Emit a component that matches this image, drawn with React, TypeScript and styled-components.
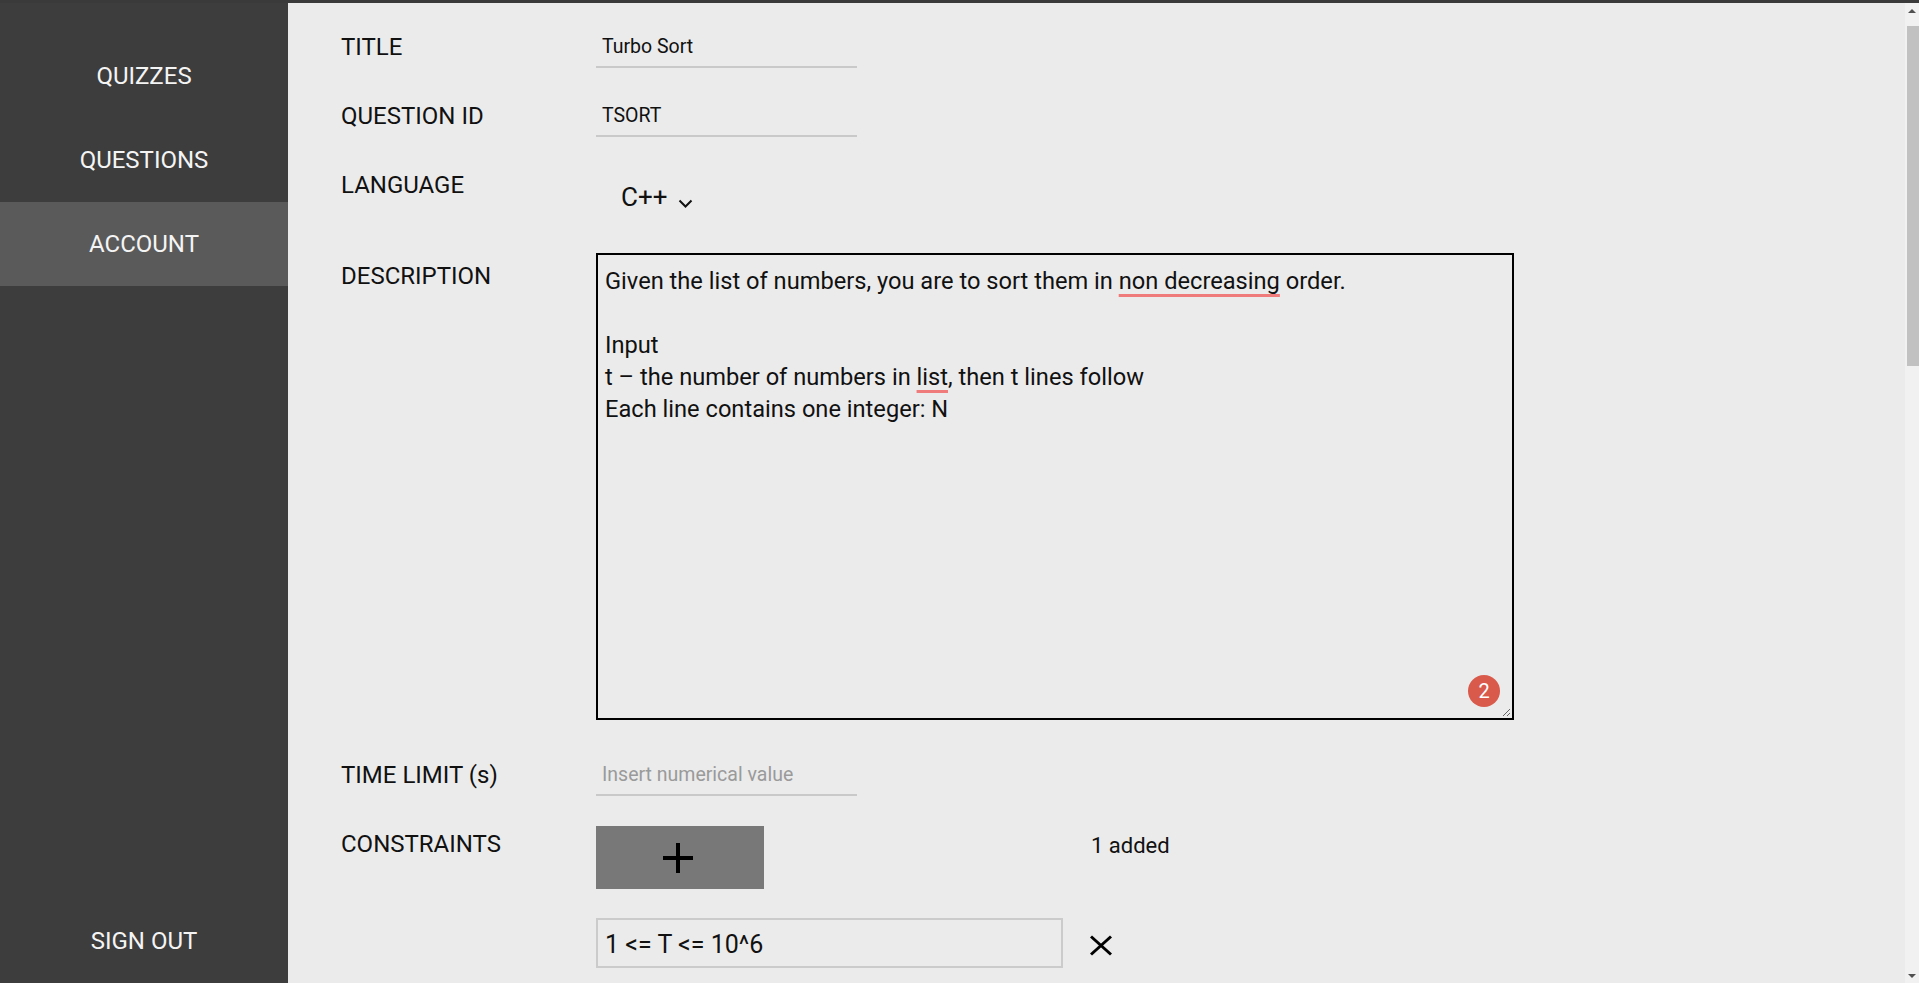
import styled, { createGlobalStyle } from 'styled-components'

const GlobalStyle = createGlobalStyle`
  html, body {
    margin: 0;
    height: 100%;
    overflow: hidden;
  }
  body {
    font-family: Roboto, "Liberation Sans", Arial, sans-serif;
    background: #3d3d3d;
  }
  #root {
    height: 100%;
  }
`

const Shell = styled.div`
  height: 100vh;
  display: flex;
  flex-direction: column;
  border-top: 3px solid #3a3a3a;
  box-sizing: border-box;
`
const Body = styled.div`
  flex: 1;
  min-height: 0;
  display: flex;
`
const Sidebar = styled.nav`
  width: 288px;
  flex-shrink: 0;
  background: #3d3d3d;
  display: flex;
  flex-direction: column;
  padding-top: 31px;
  box-sizing: border-box;
`
const NavItem = styled.a<{ $active?: boolean }>`
  height: 84px;
  display: flex;
  align-items: center;
  justify-content: center;
  color: #f4f4f4;
  font-size: 24px;
  text-decoration: none;
  cursor: pointer;
  background: ${(p) => (p.$active ? '#5a5a5a' : 'transparent')};
`
const SignOut = styled(NavItem)`
  margin-top: auto;
`

const Main = styled.main`
  flex: 1;
  overflow: hidden;
  background: #ebebeb;
`

// page scrollbar, drawn since the window shows it at scroll top
const ScrollRail = styled.div`
  width: 14px;
  flex-shrink: 0;
  background: #f1f1f1;
  display: flex;
  flex-direction: column;
  align-items: center;
  padding: 6px 0 5px;
  box-sizing: border-box;
`
const Arrow = styled.svg`
  flex-shrink: 0;
`
const Thumb = styled.div`
  align-self: stretch;
  margin: 13px 0 0 2px;
  height: 340px;
  background: #c1c1c1;
`
const RailSpacer = styled.div`
  flex: 1;
`

const Form = styled.div`
  padding: 23px 0 0 53px;
  color: #111;
`
const Row = styled.div<{ $gap?: number }>`
  display: grid;
  grid-template-columns: 255px auto;
  align-items: start;
  margin-bottom: ${(p) => p.$gap ?? 27}px;
`
const Label = styled.div<{ $offset?: number }>`
  font-size: 24px;
  line-height: 28px;
  padding-top: ${(p) => p.$offset ?? 7}px;
`
const LineInput = styled.input`
  width: 261px;
  height: 42px;
  box-sizing: border-box;
  border: none;
  border-bottom: 2px solid #c9c9c9;
  background: transparent;
  font-family: inherit;
  font-size: 19.5px;
  color: #111;
  padding: 1px 6px 0;
  outline: none;

  &::placeholder {
    color: #9a9a9a;
  }
`
const LanguageSelect = styled.button`
  height: 62px;
  display: inline-flex;
  align-items: center;
  gap: 11px;
  padding: 4px 0 0 25px;
  box-sizing: border-box;
  border: none;
  background: transparent;
  font-family: inherit;
  font-size: 26px;
  line-height: 30px;
  color: #111;
  cursor: pointer;

  svg {
    margin-top: 12px;
  }
`
const DescriptionBox = styled.div`
  position: relative;
  width: 918px;
  height: 467px;
  box-sizing: border-box;
  border: 2px solid #000;
  padding: 10px 7px;
  font-size: 23.65px;
  line-height: 32px;
  white-space: pre-wrap;
`
const Misspelled = styled.span`
  text-decoration: underline;
  text-decoration-color: #ef7b7b;
  text-decoration-thickness: 3px;
  text-underline-offset: 5px;
  text-decoration-skip-ink: none;
`
const Badge = styled.span`
  position: absolute;
  right: 12px;
  bottom: 11px;
  width: 32px;
  height: 32px;
  border-radius: 50%;
  background: #d95a4b;
  color: #fff;
  font-size: 20px;
  line-height: 1;
  display: flex;
  align-items: center;
  justify-content: center;
`
const Grip = styled.svg`
  position: absolute;
  right: 1px;
  bottom: 1px;
`
const ConstraintGrid = styled.div`
  display: grid;
  grid-template-columns: 467px auto;
  column-gap: 26px;
  row-gap: 29px;
  padding-top: 3px;
  align-items: start;
`
const AddButton = styled.button`
  width: 168px;
  height: 63px;
  border: none;
  background: #787878;
  display: flex;
  align-items: center;
  justify-content: center;
  padding: 0 4px 0 0;
  cursor: pointer;
`
const AddedCount = styled.div`
  font-size: 22px;
  line-height: 26px;
  padding: 7px 0 0 2px;
`
const ConstraintInput = styled.input`
  width: 467px;
  height: 50px;
  box-sizing: border-box;
  border: 2px solid #cbcbcb;
  background: transparent;
  font-family: inherit;
  font-size: 25px;
  color: #111;
  padding: 3px 7px 0;
  outline: none;
`
const RemoveButton = styled.button`
  height: 50px;
  border: none;
  background: transparent;
  padding: 4px 0 0;
  display: flex;
  align-items: center;
  cursor: pointer;
`

export default function App() {
  return (
    <>
      <GlobalStyle />
      <Shell>
        <Body>
          <Sidebar>
            <NavItem>QUIZZES</NavItem>
            <NavItem>QUESTIONS</NavItem>
            <NavItem $active>ACCOUNT</NavItem>
            <SignOut>SIGN OUT</SignOut>
          </Sidebar>
          <Main>
            <Form>
              <Row>
                <Label>TITLE</Label>
                <LineInput defaultValue="Turbo Sort" />
              </Row>
              <Row>
                <Label>QUESTION ID</Label>
                <LineInput defaultValue="TSORT" />
              </Row>
              <Row>
                <Label>LANGUAGE</Label>
                <div>
                  <LanguageSelect>
                    C++
                    <svg width="15" height="9" viewBox="0 0 15 9">
                      <polyline points="1.5,1.5 7.5,7.5 13.5,1.5" fill="none" stroke="#111" strokeWidth="2" />
                    </svg>
                  </LanguageSelect>
                </div>
              </Row>
              <Row $gap={34}>
                <Label $offset={9}>DESCRIPTION</Label>
                <DescriptionBox>
                  {'Given the list of numbers, you are to sort them in '}
                  <Misspelled>non decreasing</Misspelled>
                  {' order.\n\nInput\nt – the number of numbers in '}
                  <Misspelled>list</Misspelled>
                  {', then t lines follow\nEach line contains one integer: N'}
                  <Badge>2</Badge>
                  <Grip width="10" height="10" viewBox="0 0 10 10">
                    <line x1="9" y1="2" x2="2" y2="9" stroke="#666" strokeWidth="1" />
                    <line x1="9" y1="6" x2="6" y2="9" stroke="#666" strokeWidth="1" />
                  </Grip>
                </DescriptionBox>
              </Row>
              <Row>
                <Label>TIME LIMIT (s)</Label>
                <LineInput placeholder="Insert numerical value" />
              </Row>
              <Row>
                <Label>CONSTRAINTS</Label>
                <ConstraintGrid>
                  <AddButton>
                    <svg width="32" height="32" viewBox="0 0 32 32">
                      <line x1="16" y1="1" x2="16" y2="31" stroke="#000" strokeWidth="4" />
                      <line x1="1" y1="16" x2="31" y2="16" stroke="#000" strokeWidth="4" />
                    </svg>
                  </AddButton>
                  <AddedCount>1 added</AddedCount>
                  <ConstraintInput defaultValue="1 <= T <= 10^6" />
                  <RemoveButton>
                    <svg width="24" height="21" viewBox="0 0 24 21">
                      <line x1="2" y1="1.5" x2="22" y2="19.5" stroke="#000" strokeWidth="3" />
                      <line x1="22" y1="1.5" x2="2" y2="19.5" stroke="#000" strokeWidth="3" />
                    </svg>
                  </RemoveButton>
                </ConstraintGrid>
              </Row>
            </Form>
          </Main>
          <ScrollRail>
            <Arrow width="8" height="4" viewBox="0 0 8 4">
              <path d="M0 4 L4 0 L8 4 Z" fill="#505050" />
            </Arrow>
            <Thumb />
            <RailSpacer />
            <Arrow width="8" height="4" viewBox="0 0 8 4">
              <path d="M0 0 L4 4 L8 0 Z" fill="#505050" />
            </Arrow>
          </ScrollRail>
        </Body>
      </Shell>
    </>
  )
}
